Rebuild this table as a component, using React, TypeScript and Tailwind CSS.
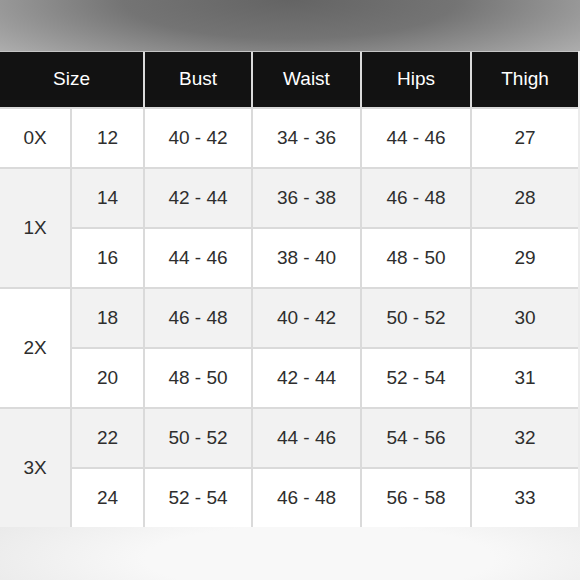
const rows = [
  { size: "0X", num: "12", bust: "40 - 42", waist: "34 - 36", hips: "44 - 46", thigh: "27" },
  { size: "1X", num: "14", bust: "42 - 44", waist: "36 - 38", hips: "46 - 48", thigh: "28" },
  { size: "", num: "16", bust: "44 - 46", waist: "38 - 40", hips: "48 - 50", thigh: "29" },
  { size: "2X", num: "18", bust: "46 - 48", waist: "40 - 42", hips: "50 - 52", thigh: "30" },
  { size: "", num: "20", bust: "48 - 50", waist: "42 - 44", hips: "52 - 54", thigh: "31" },
  { size: "3X", num: "22", bust: "50 - 52", waist: "44 - 46", hips: "54 - 56", thigh: "32" },
  { size: "", num: "24", bust: "52 - 54", waist: "46 - 48", hips: "56 - 58", thigh: "33" },
];

const headers = ["Bust", "Waist", "Hips", "Thigh"];

function Cell({ children, shaded }: { children: React.ReactNode; shaded?: boolean }) {
  return (
    <div
      className={`flex items-center justify-center ${shaded ? "bg-[#f2f2f2]" : "bg-white"}`}
    >
      {children}
    </div>
  );
}

export default function App() {
  return (
    <div
      className="flex h-[580px] w-[580px] flex-col bg-[#ececec] text-[19px] text-[#2e2e2e]"
      style={{ fontFamily: '"Liberation Sans", Arial, sans-serif' }}
    >
      <div className="h-[51px] bg-[radial-gradient(ellipse_72%_190%_at_50%_0%,#646464_0%,#747474_40%,#bdbdbd_100%)]" />

      <div className="grid w-[578px] grid-cols-[70px_71px_106px_107px_108px_106px] grid-rows-[55px_repeat(7,58px)] gap-[2px] border-t border-[#c4c4c4] bg-[#dadada]">
        <div className="col-span-2 flex items-center justify-center bg-[#121212] text-white">
          Size
        </div>
        {headers.map((h) => (
          <div key={h} className="flex items-center justify-center bg-[#121212] text-white">
            {h}
          </div>
        ))}

        {rows.map((r, i) => {
          const shaded = i % 2 === 1;
          return [
            r.size ? (
              <div
                key={`s${i}`}
                className={`flex items-center justify-center ${
                  i === 0 ? "" : "row-span-2"
                } ${r.size === "1X" || r.size === "3X" ? "bg-[#f2f2f2]" : "bg-white"}`}
              >
                {r.size}
              </div>
            ) : null,
            <Cell key={`n${i}`} shaded={shaded}>{r.num}</Cell>,
            <Cell key={`b${i}`} shaded={shaded}>{r.bust}</Cell>,
            <Cell key={`w${i}`} shaded={shaded}>{r.waist}</Cell>,
            <Cell key={`h${i}`} shaded={shaded}>{r.hips}</Cell>,
            <Cell key={`t${i}`} shaded={shaded}>{r.thigh}</Cell>,
          ];
        })}
      </div>

      <div className="flex-1 bg-[radial-gradient(ellipse_75%_160%_at_55%_60%,#f8f8f8_40%,#e4e4e4_100%)]" />
    </div>
  );
}
